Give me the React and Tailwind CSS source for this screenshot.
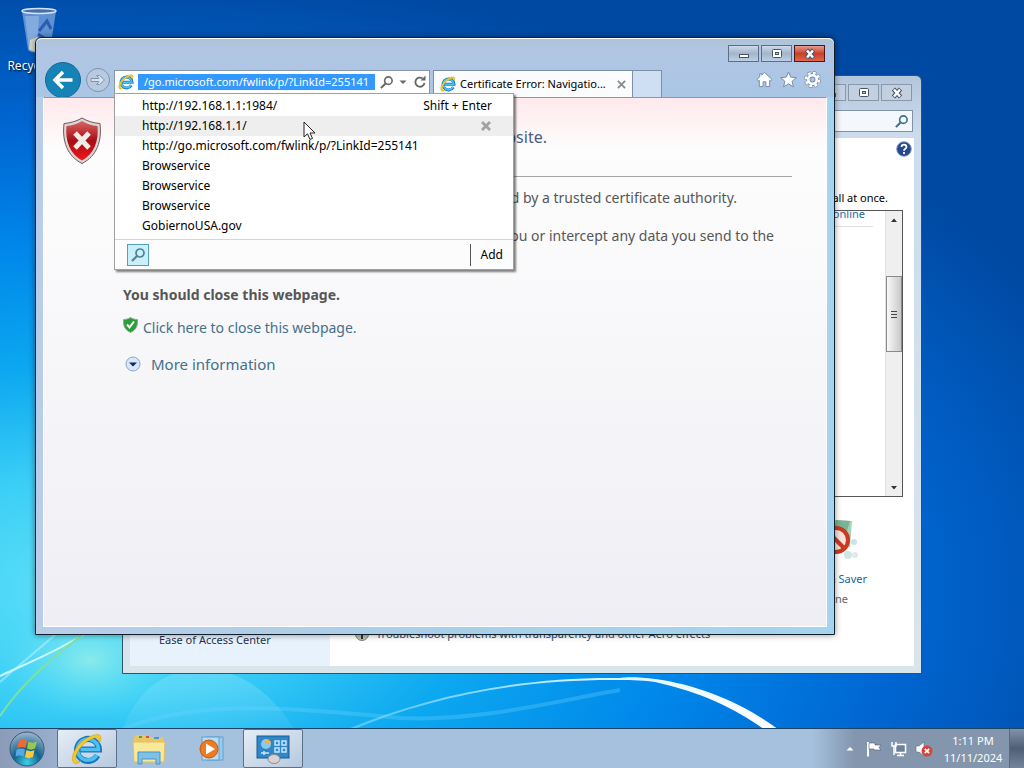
import React from "react";

const suggestions = [
  { text: "http://192.168.1.1:1984/", hint: "Shift + Enter" },
  { text: "http://192.168.1.1/", active: true },
  { text: "http://go.microsoft.com/fwlink/p/?LinkId=255141" },
  { text: "Browservice" },
  { text: "Browservice" },
  { text: "Browservice" },
  { text: "GobiernoUSA.gov" },
];

const Wallpaper = () => (
  <svg
    className="absolute inset-0 w-full h-full"
    viewBox="0 0 1024 768"
    preserveAspectRatio="none"
    aria-hidden="true"
  >
    <defs>
      <radialGradient
        id="sky"
        gradientUnits="userSpaceOnUse"
        cx="0"
        cy="0"
        r="1"
        gradientTransform="translate(90 590) scale(1080 620)"
      >
        <stop offset="0" stopColor="#5fe0f8" />
        <stop offset="0.18" stopColor="#3ccff6" />
        <stop offset="0.36" stopColor="#0ca8f0" />
        <stop offset="0.55" stopColor="#0088ea" />
        <stop offset="0.75" stopColor="#0066d2" />
        <stop offset="1" stopColor="#0049a2" />
      </radialGradient>
      <radialGradient id="glow">
        <stop offset="0" stopColor="#a5f3e6" stopOpacity="0.7" />
        <stop offset="1" stopColor="#5fe0f8" stopOpacity="0" />
      </radialGradient>
      <linearGradient id="arc" x1="0" x2="1">
        <stop offset="0" stopColor="#7fdcff" stopOpacity="0.5" />
        <stop offset="0.55" stopColor="#d6f3ff" />
        <stop offset="1" stopColor="#ffffff" />
      </linearGradient>
      <linearGradient id="arch" x1="0" y1="0" x2="0" y2="1">
        <stop offset="0" stopColor="#8fe4fb" stopOpacity="0.4" />
        <stop offset="1" stopColor="#8fe4fb" stopOpacity="0.05" />
      </linearGradient>
    </defs>
    <rect width="1024" height="768" fill="url(#sky)" />
    <ellipse cx="90" cy="660" rx="90" ry="60" fill="url(#glow)" />
    <path d="M120 740 C140 650 250 640 300 740" fill="url(#arch)" />
    <path d="M0 682 C30 655 70 625 90 600" fill="none" stroke="#b9f0fb" strokeWidth="2" opacity="0.6" />
    <path d="M0 676 C30 662 60 650 98 626" fill="none" stroke="#c9f7ff" strokeWidth="2" />
    <path d="M0 716 C22 682 60 650 100 622" fill="none" stroke="#7fe29a" strokeWidth="2" />
    <path d="M110 735 C180 700 270 705 400 718 C480 722 560 700 620 690" fill="none" stroke="#6fd4ff" strokeWidth="4" opacity="0.3" />
    <path
      d="M345 730 C430 695 520 677 620 678 C625 677 640 677 655 679 C700 685 745 704 779 730 L765 730 C735 708 700 692 655 682 C640 680 625 680 620 680 C520 679 430 697 352 730 Z"
      fill="url(#arc)"
    />
  </svg>
);

const IeLogo = ({ className }) => (
  <svg className={className} viewBox="0 0 32 32" aria-hidden="true">
    <path d="M26.5 22.5 A11 11 0 1 1 28 16.5 H9" fill="none" stroke="#1576bd" strokeWidth="6" />
    <path d="M26 22 A10.5 10.5 0 1 1 27.500 16.500 H9.500" fill="none" stroke="#4cc0ee" strokeWidth="3.500" />
    <path
      d="M3 30 C-2 25 5 11 16 5 C23 1 30 0 30 5 C30 7 29 9 28 10 C28.500 6 27 4 23 5 C13 8 3 20 5 27 C6 29 8 29 10 28 C7 31 4 31 3 30 Z"
      fill="#f5c92c"
      stroke="#d79d10"
      strokeWidth="0.6"
    />
  </svg>
);

const MinimizeGlyph = () => (
  <svg className="w-4 h-3" viewBox="0 0 16 12" aria-hidden="true">
    <rect x="3.500" y="6.500" width="9" height="3" fill="#fff" stroke="#46566a" />
  </svg>
);

const MaximizeGlyph = () => (
  <svg className="w-4 h-3" viewBox="0 0 16 12" aria-hidden="true">
    <rect x="3.500" y="1.500" width="9" height="8" rx="1" fill="#fff" stroke="#46566a" />
    <rect x="6.500" y="4.500" width="3" height="2" fill="#b9c8da" stroke="#46566a" />
  </svg>
);

const CloseGlyph = () => (
  <svg className="w-4 h-3" viewBox="0 0 16 12" aria-hidden="true">
    <path d="M4.500 2 L11.500 10 M11.500 2 L4.500 10" stroke="#46566a" strokeWidth="4.500" />
    <path d="M5 2.500 L11 9.500 M11 2.500 L5 9.500" stroke="#fff" strokeWidth="2.500" />
  </svg>
);

const WindowControls = ({ focused }) => {
  const base = focused
    ? "border-[#5d6f86] bg-linear-to-b from-[#cbd9ea] via-[#a4b5cb] via-50% to-[#bccfe6]"
    : "border-[#8798ad] bg-[#c3d0df]";
  const close = focused
    ? "border-[#4b1a17] bg-linear-to-b from-[#e59a8b] via-[#c8402a] via-50% to-[#e0664a]"
    : "border-[#8798ad] bg-[#c3d0df]";
  return (
    <div className="flex justify-end gap-[2px]">
      <button aria-label="Minimize" className={`w-[31px] h-[17px] border flex items-center justify-center ${base}`}>
        <MinimizeGlyph />
      </button>
      <button aria-label="Maximize" className={`w-[31px] h-[17px] border flex items-center justify-center ${base}`}>
        <MaximizeGlyph />
      </button>
      <button aria-label="Close" className={`w-[31px] h-[17px] border flex items-center justify-center ${close}`}>
        <CloseGlyph />
      </button>
    </div>
  );
};

const SearchGlyph = ({ className, color = "#666" }) => (
  <svg className={className} viewBox="0 0 16 16" fill="none" stroke={color} aria-hidden="true">
    <circle cx="10" cy="6" r="4" strokeWidth="1.700" />
    <path d="M7 9 L2 14" strokeWidth="2.200" />
  </svg>
);

const Suggestions = () => (
  <div className="absolute z-10 -left-px top-full w-[400px] bg-white border border-[#a0a0a0] shadow-[2px_2px_2px_rgba(0,0,0,0.5)]">
    <ul className="pt-[2px] pb-[3px] text-[12px]">
      {suggestions.map((item, i) => (
        <li
          key={i}
          className={`flex items-center justify-between h-5 pl-[27px] pr-[21px] text-black ${
            item.active ? "bg-[#eeeeee]" : ""
          }`}
        >
          <a href="#">{item.text}</a>
          {item.hint && <span>{item.hint}</span>}
          {item.active && (
            <button aria-label="Remove" className="w-3 h-3">
              <svg viewBox="0 0 12 12" aria-hidden="true">
                <path d="M2 2 L10 10 M10 2 L2 10" stroke="#a2a2a2" strokeWidth="2.800" />
              </svg>
            </button>
          )}
        </li>
      ))}
    </ul>
    <div className="flex items-center justify-between h-[30px] border-t border-[#d5d5d5] bg-[#fcfcfc] pl-3 text-[12px]">
      <button
        aria-label="Search"
        className="w-[22px] h-[22px] border border-[#4fa3b8] bg-[#c9f0fa] flex items-center justify-center"
      >
        <SearchGlyph className="w-4 h-4" color="#4d8492" />
      </button>
      <button className="h-[22px] px-[10px] border-l border-[#555] text-black">Add</button>
    </div>
  </div>
);

const AddressBar = () => (
  <div className="relative flex items-center w-[316px] h-6 border border-[#8796a8] border-b-[#c9c9c9] bg-white pl-[3px] mb-[3px] self-end">
    <IeLogo className="w-4 h-4 shrink-0" />
    <input
      type="text"
      aria-label="Address"
      defaultValue="/go.microsoft.com/fwlink/p/?LinkId=255141"
      className="ml-1 w-[237px] h-4 bg-[#3399ff] text-white text-center outline-none"
    />
    <button aria-label="Search" className="ml-1">
      <SearchGlyph className="w-[15px] h-[15px]" />
    </button>
    <button aria-label="Show address bar autocomplete" className="ml-[5px]">
      <svg className="w-2 h-2" viewBox="0 0 8 8" aria-hidden="true">
        <path d="M0.500 2.500 H7.500 L4 6 Z" fill="#666" />
      </svg>
    </button>
    <button aria-label="Refresh" className="ml-[6px]">
      <svg className="w-[14px] h-[14px]" viewBox="0 0 14 14" aria-hidden="true">
        <path d="M11.500 8 A4.600 4.600 0 1 1 9.500 3.300" fill="none" stroke="#666" strokeWidth="1.800" />
        <path d="M7.500 5.500 H12.500 V0.500 Z" fill="#666" />
      </svg>
    </button>
    <Suggestions />
  </div>
);

const ToolbarIcons = () => (
  <div className="flex items-center gap-[7px] ml-auto mr-[13px]">
    <button aria-label="Home">
      <svg className="w-[17px] h-[17px]" viewBox="0 0 18 18" aria-hidden="true">
        <path
          d="M9 1.500 L17 9 L15.500 10.500 L14.500 9.700 V16.500 H10.500 V11.500 H7.500 V16.500 H3.500 V9.700 L2.500 10.500 L1 9 L4 6.200 V3 H6 V4.300 Z"
          fill="#fff"
          stroke="#7089a8"
        />
      </svg>
    </button>
    <button aria-label="Favorites">
      <svg className="w-[17px] h-[17px]" viewBox="0 0 18 18" aria-hidden="true">
        <path
          d="M9 1 L11.300 6.500 L17.300 7 L12.800 10.900 L14.200 16.800 L9 13.600 L3.800 16.800 L5.200 10.900 L0.700 7 L6.700 6.500 Z"
          fill="#fff"
          stroke="#7089a8"
        />
      </svg>
    </button>
    <button aria-label="Tools">
      <svg className="w-[17px] h-[17px]" viewBox="0 0 18 18" fill="none" aria-hidden="true">
        <circle cx="9" cy="9" r="7" stroke="#7089a8" strokeWidth="4" strokeDasharray="3.500 2" />
        <circle cx="9" cy="9" r="4.500" stroke="#7089a8" strokeWidth="4.600" />
        <circle cx="9" cy="9" r="7" stroke="#fff" strokeWidth="2.600" strokeDasharray="2.900 2.600" strokeDashoffset="-0.300" />
        <circle cx="9" cy="9" r="4.500" stroke="#fff" strokeWidth="2.800" />
      </svg>
    </button>
  </div>
);

const ErrorPage = () => (
  <main className="flex-1 flex pt-[19px] pl-[18px] pr-[34px] text-[14px] leading-5 text-[#575757] bg-linear-to-b from-[#ffe9ec] via-[#fdfdfd] via-10% to-[#efeef4] border border-white border-t-[#8a97a8] overflow-hidden">
    <svg className="w-10 h-12 shrink-0" viewBox="0 0 40 48" aria-hidden="true">
      <defs>
        <linearGradient id="red" x1="0" y1="0" x2="0" y2="1">
          <stop offset="0" stopColor="#d66464" />
          <stop offset="0.5" stopColor="#a80d14" />
          <stop offset="1" stopColor="#f01818" />
        </linearGradient>
      </defs>
      <path
        d="M20 1 C25 4 31 6 38 6.500 C40 24 35 39 20 46.500 C5 39 0 24 2 6.500 C9 6 15 4 20 1 Z"
        fill="#ddd5d3"
        stroke="#6f5b5b"
      />
      <path
        d="M20 4 C25 7 30 8.500 35.500 9 C37 24 32 37 20 43.500 C8 37 3 24 4.500 9 C10 8.500 15 7 20 4 Z"
        fill="url(#red)"
      />
      <path d="M13 16 L27 31 M27 16 L13 31" stroke="#f3ebe8" strokeWidth="5" />
    </svg>
    <div className="flex-1 pt-2 pl-[21px]">
      <h1 className="pr-[245px] text-right text-base leading-6 text-[#4a5d8c]">
        There is a certificate problem with this website.
      </h1>
      <hr className="mt-[27px] border-[#a5a5a5]" />
      <p className="mt-[11px] pr-[55px] text-right">
        The certificate for this website was not issued by a trusted certificate authority.
      </p>
      <p className="mt-[18px]">
        <span className="block pr-[18px] text-right">
          Certificate problems may indicate an attempt to fool you or intercept any data you send to the
        </span>
        server.
      </p>
      <p className="mt-[19px] font-bold">You should close this webpage.</p>
      <a href="#" className="mt-[13px] flex gap-[5px] text-[#44708c]">
        <svg className="w-[15px] h-4 shrink-0 -mt-px" viewBox="0 0 15 16" aria-hidden="true">
          <path
            d="M7.500 0.500 C10 2 12 2.500 14.500 2.500 C15 9 13 13 7.500 15.500 C2 13 0 9 0.500 2.500 C3 2.500 5 2 7.500 0.500 Z"
            fill="#2d9c3a"
            stroke="#98a89c"
          />
          <path d="M4 7.500 L6.500 10.500 L11 4.500" fill="none" stroke="#fff" strokeWidth="2" />
        </svg>
        Click here to close this webpage.
      </a>
      <button className="mt-4 flex items-center gap-[10px] ml-[2px] text-[15px] leading-5 text-[#44708c]">
        <svg className="w-4 h-4" viewBox="0 0 16 16" aria-hidden="true">
          <circle cx="8" cy="8" r="7" fill="#d8e6f7" stroke="#8fa6c6" />
          <path d="M4 6.500 H12 L8 10.500 Z" fill="#0c2a66" />
        </svg>
        More information
      </button>
    </div>
  </main>
);

const BrowserWindow = () => (
  <section className="absolute left-[35px] right-[189px] top-[37px] bottom-[133px] flex flex-col rounded-t-md border border-[#13202c] shadow-[0_0_6px_rgba(0,0,0,0.45)] bg-linear-to-r from-[#b9cde9] via-[#a9cfe8] to-[#a4d4ef]">
    <header className="flex flex-col rounded-t-md border-t border-white bg-linear-to-b from-[#adc4d8] via-[#b2c5e4] via-20% to-[#a9c6e4]">
      <div className="pt-[6px] pr-[9px]">
        <WindowControls focused />
      </div>
      <div className="flex items-center h-[35px] pl-[9px]">
        <button
          aria-label="Back"
          className="w-9 h-9 rounded-full bg-[#1583b6] border border-[#0f6a98] flex items-center justify-center"
        >
          <svg className="w-6 h-6" viewBox="0 0 24 24" fill="none" stroke="#fff" strokeWidth="3.500" aria-hidden="true">
            <path d="M21.500 12 H4 M12 4 L4 12 L12 20" />
          </svg>
        </button>
        <button
          aria-label="Forward"
          className="w-6 h-6 ml-[5px] mr-1 rounded-full border border-[#8093ad] bg-[#b9cae0] flex items-center justify-center"
        >
          <svg className="w-[18px] h-[18px]" viewBox="0 0 18 18" aria-hidden="true">
            <path
              d="M2 7.500 H10 L7.500 4.500 H10.500 L15.500 9 L10.500 13.500 H7.500 L10 10.500 H2 Z"
              fill="#d7e3f2"
              stroke="#8093ad"
            />
          </svg>
        </button>
        <AddressBar />
        <div className="flex items-center self-end w-[200px] h-[27px] ml-[3px] px-[6px] border border-b-0 border-[#7e8fa5] bg-[#fbfcfe]">
          <IeLogo className="w-4 h-4 shrink-0" />
          <button className="ml-1 flex-1 text-left text-black whitespace-nowrap">Certificate Error: Navigatio...</button>
          <button aria-label="Close tab">
            <svg className="w-[9px] h-[9px]" viewBox="0 0 10 10" aria-hidden="true">
              <path d="M1 1 L9 9 M9 1 L1 9" stroke="#8a8a8a" strokeWidth="2" />
            </svg>
          </button>
        </div>
        <button
          aria-label="New tab"
          className="self-end w-[29px] h-[27px] border border-l-0 border-b-0 border-[#7e8fa5] bg-[#cfdff3]"
        />
        <ToolbarIcons />
      </div>
    </header>
    <div className="flex-1 flex min-h-0 px-[7px] pb-[7px]">
      <ErrorPage />
    </div>
  </section>
);

const ScreenSaverIcon = () => (
  <svg className="w-12 h-12" viewBox="0 0 48 48" aria-hidden="true">
    <path d="M6 2 L42 4 L40 30 L8 34 Z" fill="#a5d2ba" />
    <path d="M26 3 L40 4 L37 14 L24 12 Z" fill="#79b393" />
    <circle cx="44" cy="25" r="3" fill="#cfe0ea" />
    <circle cx="38" cy="38" r="4" fill="#cfe6e2" />
    <circle cx="45" cy="38" r="3" fill="#dcecec" />
    <circle cx="26" cy="23" r="12" fill="#f6e2da" stroke="#c93a20" strokeWidth="4" />
    <path d="M17 14 L35 32" stroke="#c93a20" strokeWidth="4" />
  </svg>
);

const Personalization = () => (
  <section className="absolute left-[122px] right-[102px] top-[75px] bottom-[94px] flex flex-col rounded-t-md border border-[#2f536f] bg-linear-to-b from-[#b4c6dc] via-[#ccdced] via-10% to-[#d9e5ea] px-[7px] pb-[7px]">
    <header className="flex flex-col gap-2 pt-2">
      <div className="pr-[2px]">
        <WindowControls />
      </div>
      <label className="self-end flex items-center w-[220px] h-[22px] mr-px mt-px border border-[#7e93aa] bg-[#f4f8fc] pr-[3px]">
        <input type="search" aria-label="Search Control Panel" className="flex-1 outline-none" />
        <SearchGlyph className="w-[15px] h-[15px]" color="#39708f" />
      </label>
    </header>
    <div className="flex-1 flex min-h-0 mt-[6px] bg-white overflow-hidden">
      <nav className="w-[200px] shrink-0 flex flex-col justify-end bg-[#e8f2fc] pl-[29px] pb-4">
        <a href="#" className="leading-5 text-[#1b3350]">Ease of Access Center</a>
      </nav>
      <div className="flex-1 flex flex-col items-stretch pl-3">
        <button aria-label="Help" className="self-end w-4 h-4 mt-[3px] mr-[2px]">
          <svg viewBox="0 0 16 16" aria-hidden="true">
            <circle cx="8" cy="8" r="7.300" fill="#24488f" stroke="#8c9bb5" />
            <path d="M5.500 6 C5.500 2.800 10.500 2.800 10.500 6 C10.500 8 8 7.700 8 9.800 M8 11 V13" fill="none" stroke="#fff" strokeWidth="1.800" />
          </svg>
        </button>
        <p className="mt-[31px] mr-[26px] leading-5 text-right text-black">
          Click a theme to change the background and sounds all at once.
        </p>
        <div className="flex h-[287px] mt-[2px] mr-[11px] border border-[#555] bg-white overflow-hidden">
          <div className="flex-1 mr-3">
            <div className="h-[23px] border-b border-[#e2e2e2] text-right pr-2">
              <a href="#" className="block -mt-[7px] leading-5 text-[#1b66a8]">Get more themes online</a>
            </div>
          </div>
          <div className="w-[17px] flex flex-col items-center bg-[#efefef] border-l border-[#e2e2e2]">
            <svg className="w-2 h-[17px]" viewBox="0 0 8 17" aria-hidden="true">
              <path d="M1 11 H7 L4 7.500 Z" fill="#333" />
            </svg>
            <div className="w-4 h-[76px] mt-12 border border-[#8a8a8a] bg-linear-to-r from-[#f8f8f8] to-[#c9c9c9] flex flex-col items-center justify-center gap-[2px]">
              <i className="w-[6px] h-px bg-[#444]" />
              <i className="w-[6px] h-px bg-[#444]" />
              <i className="w-[6px] h-px bg-[#444]" />
            </div>
            <svg className="w-2 h-[17px] mt-auto" viewBox="0 0 8 17" aria-hidden="true">
              <path d="M1 7 H7 L4 10.500 Z" fill="#333" />
            </svg>
          </div>
        </div>
        <div className="self-end flex flex-col items-center w-[104px] mt-5 mr-[28px] leading-5">
          <ScreenSaverIcon />
          <a href="#" className="mt-1 text-[#1b5fa0]">Screen Saver</a>
          <span className="text-[#666]">None</span>
        </div>
        <a href="#" className="flex items-center gap-[6px] mt-[15px] ml-3 leading-5 text-[#1b4c78]">
          <svg className="w-4 h-4" viewBox="0 0 16 16" aria-hidden="true">
            <circle cx="8" cy="8" r="6.500" fill="#b9c4b2" stroke="#77837a" />
            <path d="M8 8 V13" stroke="#333" strokeWidth="2" />
          </svg>
          Troubleshoot problems with transparency and other Aero effects
        </a>
      </div>
    </div>
  </section>
);

const RecycleBin = () => (
  <a href="#" className="absolute left-px top-[7px] flex flex-col items-center w-[76px] text-white">
    <svg className="w-10 h-[49px]" viewBox="0 0 40 49" aria-hidden="true">
      <path d="M3 4 H37 L31 43 C28 47 12 47 9 43 Z" fill="#7da7dc" opacity="0.75" />
      <path d="M6 9 H20 L18 44 L10 42 Z" fill="#a8c6ea" opacity="0.5" />
      <path d="M11 33 L18 30 L29 35 L29 43 C24 46 14 46 10 42 Z" fill="#d5d8c8" />
      <path d="M20 24 L28 14 L32 22 M19 27 L28 33" stroke="#2b5cb0" strokeWidth="3" fill="none" />
      <ellipse cx="20" cy="4" rx="17" ry="2.500" fill="#476fae" stroke="#d5e2f2" strokeWidth="1.500" />
    </svg>
    <span className="leading-5 text-[12px] [text-shadow:1px_1px_2px_#000]">Recycle Bin</span>
  </a>
);

const StartOrb = () => (
  <svg className="w-9 h-9" viewBox="0 0 36 36" aria-hidden="true">
    <defs>
      <radialGradient id="orb" cx="0.5" cy="0.9" r="0.9">
        <stop offset="0" stopColor="#3fd0e8" />
        <stop offset="0.45" stopColor="#12618d" />
        <stop offset="1" stopColor="#9fb9cf" />
      </radialGradient>
    </defs>
    <circle cx="18" cy="18" r="17" fill="url(#orb)" stroke="#3a5876" />
    <path d="M10 10 C13 8 15 8 18 10 L16.500 17 C14 15.500 11 15.500 8 17 Z" fill="#ee6a35" />
    <path d="M19.500 10.500 C22 12 25 12 28 10.500 L26 17.500 C23 19 20.500 19 18 17.500 Z" fill="#98c94a" />
    <path d="M7.500 18.500 C10.500 17 13.500 17 16 18.500 L14.500 25.500 C12 24 9 24 6.500 25.500 Z" fill="#58a8e6" />
    <path d="M17.500 19 C20 20.500 23 20.500 25.500 19 L24 26 C21 27.500 18.500 27.500 16 26 Z" fill="#fbc83a" />
  </svg>
);

const FolderIcon = () => (
  <svg className="w-9 h-8" viewBox="0 0 36 32" aria-hidden="true">
    <path d="M3 5 L4 2 H14 L16 4 H32 L33 8 V28 H3 Z" fill="#e9c662" />
    <rect x="8" y="3" width="3" height="2" fill="#4aa457" />
    <rect x="15" y="3" width="3" height="2" fill="#d0563f" />
    <rect x="23" y="4" width="5" height="2" fill="#4f94cf" />
    <path d="M2 9 H34 L33 29 H3 Z" fill="#f8e899" stroke="#dcc063" />
    <path d="M7 19 H29 V31 H25 V26 H11 V31 H7 Z" fill="#7fc0e8" stroke="#4b93c4" />
  </svg>
);

const MediaIcon = () => (
  <svg className="w-7 h-7" viewBox="0 0 28 28" aria-hidden="true">
    <rect x="10" y="2" width="16" height="23" fill="#9acbee" stroke="#5fa2d2" />
    <rect x="5" y="2" width="17" height="23" fill="#b9dcf3" stroke="#5fa2d2" />
    <circle cx="12" cy="14" r="9" fill="#ee7b22" stroke="#c45a10" />
    <path d="M9 8.500 L18 14 L9 19.500 Z" fill="#fff" />
  </svg>
);

const ControlPanelIcon = () => (
  <svg className="w-9 h-8" viewBox="0 0 36 32" aria-hidden="true">
    <rect x="2" y="3" width="32" height="22" fill="#2f86c8" stroke="#1a5c94" />
    <circle cx="11" cy="11" r="5" fill="#8dc8ea" />
    <path d="M11 11 V6 A5 5 0 0 1 16 11 Z" fill="#efb24c" />
    <g fill="none" stroke="#c7e6f8" strokeWidth="1.500">
      <rect x="20" y="8" width="4" height="4" />
      <rect x="27" y="8" width="4" height="4" />
      <rect x="20" y="15" width="4" height="4" />
      <rect x="27" y="15" width="4" height="4" />
      <path d="M6 20 H14 M9 18 V22" />
    </g>
    <ellipse cx="19" cy="26" rx="6" ry="4.500" fill="#d9d2d0" stroke="#8c8c94" />
  </svg>
);

const taskItems = [
  { label: "Internet Explorer", icon: <IeLogo className="w-8 h-8" />, open: true },
  { label: "Windows Explorer", icon: <FolderIcon /> },
  { label: "Windows Media Player", icon: <MediaIcon /> },
  { label: "Personalization", icon: <ControlPanelIcon />, open: true },
];

const Taskbar = () => (
  <footer className="absolute inset-x-0 bottom-0 h-10 flex items-stretch border-t border-[#1c4468] bg-linear-to-r from-[#8b9bb8] via-[#a6c1dd] via-10% to-[#a6c1dd]">
    <button aria-label="Start" className="w-[54px] flex items-center justify-center">
      <StartOrb />
    </button>
    <div className="flex gap-[2px] ml-[3px]">
      {taskItems.map((item) => (
        <button
          key={item.label}
          aria-label={item.label}
          className={`w-[60px] flex items-center justify-center rounded-[2px] ${
            item.open ? "border border-[#5d7186] bg-linear-to-br from-[#e6edf5] to-[#b7c9df]" : ""
          }`}
        >
          {item.icon}
        </button>
      ))}
    </div>
    <div className="flex items-center ml-auto pl-[34px] bg-linear-to-r from-[#a6c1dd] via-[#8396ae] via-20% to-[#8496ad]">
      <button aria-label="Show hidden icons">
        <svg className="w-2 h-2" viewBox="0 0 8 8" aria-hidden="true">
          <path d="M0.500 5.500 H7.500 L4 2 Z" fill="#fff" />
        </svg>
      </button>
      <svg className="w-4 h-4 ml-3" viewBox="0 0 16 16" aria-hidden="true">
        <path d="M2 1 V15.500" stroke="#fff" strokeWidth="2" />
        <path d="M3 2 H9 V4 H15 L13 6.500 L15 9 H8 V8 H3 Z" fill="#fff" stroke="#4b5a6d" strokeWidth="0.600" />
      </svg>
      <svg className="w-4 h-4 ml-[9px]" viewBox="0 0 16 16" aria-hidden="true">
        <rect x="4.500" y="3.500" width="10" height="8" fill="#6d8196" stroke="#fff" strokeWidth="1.500" />
        <path d="M6 14.500 H13 M9.500 12 V14 M1 1 V5 H5 V1 M3 5 V14" fill="none" stroke="#fff" strokeWidth="1.500" />
      </svg>
      <svg className="w-[18px] h-4 ml-2" viewBox="0 0 18 16" aria-hidden="true">
        <path d="M1 5 H4 L9 1 V15 L4 11 H1 Z" fill="#fff" stroke="#5b6878" strokeWidth="0.600" />
        <circle cx="12" cy="10" r="5.500" fill="#d2453d" />
        <path d="M9.800 7.800 L14.200 12.200 M14.200 7.800 L9.800 12.200" stroke="#fff" strokeWidth="1.700" />
      </svg>
      <div className="w-[76px] pl-1 text-center text-white text-[11px] leading-[17px]">
        <div>1:11 PM</div>
        <div>11/11/2024</div>
      </div>
      <button
        aria-label="Show desktop"
        className="w-[15px] h-full border-l border-[#5a6b80] bg-linear-to-b from-[#8293a8] via-[#4e6076] to-[#75869b]"
      />
    </div>
  </footer>
);

const Cursor = () => (
  <svg className="absolute z-20 left-[303px] top-[121px] w-[13px] h-5" viewBox="0 0 13 20" aria-hidden="true">
    <path
      d="M1 1 V16 L4.500 12.800 L7 18.500 L9.500 17.400 L7 12 H12 Z"
      fill="#fff"
      stroke="#222"
      strokeLinejoin="round"
    />
  </svg>
);

export default function App() {
  return (
    <div className="relative h-screen overflow-hidden bg-[#0069d6] font-['Noto_Sans',sans-serif] text-[11px] leading-4">
      <Wallpaper />
      <RecycleBin />
      <Personalization />
      <BrowserWindow />
      <Taskbar />
      <Cursor />
    </div>
  );
}
